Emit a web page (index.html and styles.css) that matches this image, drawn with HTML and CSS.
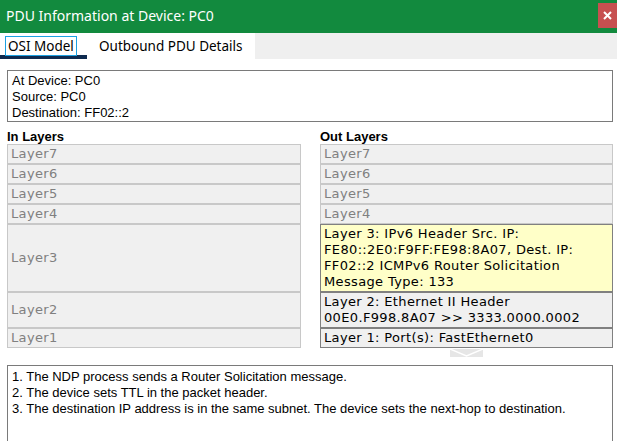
FILE: index.html
```html
<!DOCTYPE html>
<html>
<head>
<meta charset="utf-8">
<link rel="stylesheet" href="styles.css">
</head>
<body>
<div class="window">
  <div class="titlebar">
    <span class="title">PDU Information at Device: PC0</span>
    <span class="close"><svg width="11" height="11" viewBox="0 0 11 11"><path d="M2 2 L9 9 M9 2 L2 9" stroke="#fff" stroke-width="2"/></svg></span>
  </div>
  <div class="tabbar">
    <div class="tabs">
      <div class="tab active"><span class="focus">OSI Model</span></div>
      <div class="tab">Outbound PDU Details</div>
    </div>
  </div>
  <div class="content">
    <div class="info">
      <div>At Device: PC0</div>
      <div>Source: PC0</div>
      <div>Destination: FF02::2</div>
    </div>
    <div class="layers">
      <div class="head">In Layers</div>
      <div class="head">Out Layers</div>
      <div class="cell dim">Layer7</div>
      <div class="cell dim">Layer7</div>
      <div class="cell dim">Layer6</div>
      <div class="cell dim">Layer6</div>
      <div class="cell dim">Layer5</div>
      <div class="cell dim">Layer5</div>
      <div class="cell dim">Layer4</div>
      <div class="cell dim">Layer4</div>
      <div class="cell dim mid">Layer3</div>
      <div class="cell active yellow">Layer 3: IPv6 Header Src. IP:<br>FE80::2E0:F9FF:FE98:8A07, Dest. IP:<br>FF02::2 ICMPv6 Router Solicitation<br>Message Type: 133</div>
      <div class="cell dim mid">Layer2</div>
      <div class="cell active">Layer 2: Ethernet II Header<br>00E0.F998.8A07 &gt;&gt; 3333.0000.0002</div>
      <div class="cell dim">Layer1</div>
      <div class="cell active">Layer 1: Port(s): FastEthernet0</div>
      <div></div>
      <div class="arrow"><svg width="33" height="8" viewBox="0 0 33 8"><rect width="33" height="8" fill="#e6e6e6"/><path d="M0 0 L16.5 7 L33 0" fill="none" stroke="#fff" stroke-width="1.5"/></svg></div>
    </div>
    <div class="log">
      <div>1. The NDP process sends a Router Solicitation message.</div>
      <div>2. The device sets TTL in the packet header.</div>
      <div>3. The destination IP address is in the same subnet. The device sets the next-hop to destination.</div>
    </div>
  </div>
</div>
</body>
</html>
```
FILE: styles.css
```css
html, body {
  margin: 0;
  padding: 0;
  background: #fff;
}
.window {
  width: 617px;
  height: 441px;
  overflow: hidden;
  display: flex;
  flex-direction: column;
}
.titlebar {
  height: 33px;
  background: #128a3e;
  display: flex;
  align-items: center;
  justify-content: space-between;
  color: #fff;
  font-family: "Noto Sans", sans-serif;
  font-size: 14px;
  flex: none;
}
.title {
  padding-left: 6px;
  padding-bottom: 2px;
}
.close {
  width: 19px;
  height: 25px;
  margin-top: -3px;
  background: #c75050;
  display: flex;
  align-items: center;
  justify-content: center;
}
.tabbar {
  height: 26px;
  background: #efefef;
  flex: none;
  display: flex;
}
.tabs {
  width: 255px;
  background: #fff;
  display: flex;
  font-family: "Noto Sans", sans-serif;
  font-size: 13.5px;
  color: #000;
}
.tab {
  height: 26px;
  box-sizing: border-box;
  padding: 4px 0 0 12px;
}
.tab.active {
  width: 87px;
  padding-left: 6px;
  border-bottom: 4px solid #0e2a4f;
}
.focus {
  outline: 1px solid #1ba1e2;
  padding: 0 2px;
}
.content {
  padding: 11px 4px 0 7px;
  font-family: "Liberation Sans", Arial, sans-serif;
  font-size: 13px;
}
.info {
  width: 606px;
  height: 52px;
  box-sizing: border-box;
  border: 1px solid #7a7a7a;
  padding: 2px 4px;
  line-height: 16px;
}
.layers {
  display: grid;
  grid-template-columns: 294px 293px;
  column-gap: 19px;
  margin-top: 7px;
}
.head {
  font-weight: bold;
  height: 15px;
  line-height: 15px;
}
.cell {
  border: 1px solid #c8c8c8;
  background: #f0f0f0;
  padding: 1px 3px;
  line-height: 16px;
  font-family: "DejaVu Sans", Verdana, sans-serif;
  font-size: 13px;
  letter-spacing: 0.35px;
  display: flex;
  align-items: center;
  white-space: nowrap;
}
.cell.dim {
  color: #808080;
}
.cell.active {
  border-color: #808080;
  color: #000;
  display: block;
}
.cell.yellow {
  background: #ffffc8;
}
.arrow {
  height: 16px;
  display: flex;
  justify-content: center;
  align-items: flex-start;
  padding-top: 1px;
}
.log {
  width: 606px;
  height: 90px;
  box-sizing: border-box;
  border: 1px solid #7a7a7a;
  padding: 3px 4px;
  line-height: 16px;
}
```
